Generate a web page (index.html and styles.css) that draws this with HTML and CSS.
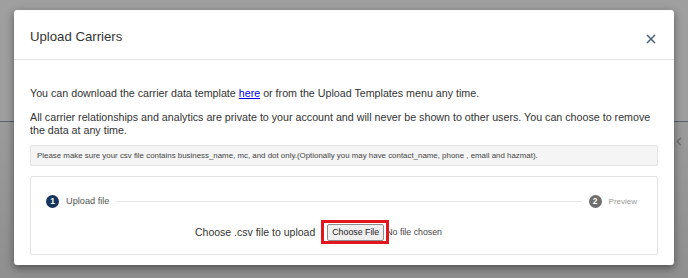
FILE: index.html
```html
<!DOCTYPE html>
<html>
<head>
<meta charset="utf-8">
<title>Upload Carriers</title>
<link rel="stylesheet" href="styles.css">
</head>
<body>
<div class="page">
  <div class="page-top"></div>
  <div class="page-rest">
    <svg class="page-chevron" width="6" height="9" viewBox="0 0 6 9"><path d="M5 0.8 L1.2 4.5 L5 8.2" fill="none" stroke="#707070" stroke-width="1.4"/></svg>
  </div>
</div>

<div class="modal">
  <div class="modal-header">
    <h4 class="modal-title">Upload Carriers</h4>
    <button class="close" aria-label="Close">
      <svg width="10" height="10" viewBox="0 0 10 10"><path d="M1 1 L9 9 M9 1 L1 9" stroke="#4a5f80" stroke-width="1.5" fill="none"/></svg>
    </button>
  </div>
  <div class="modal-body">
    <p class="para">You can download the carrier data template <a href="#" class="link">here</a> or from the Upload Templates menu any time.</p>
    <p class="para">All carrier relationships and analytics are private to your account and will never be shown to other users. You can choose to remove the data at any time.</p>
    <div class="note">Please make sure your csv file contains business_name, mc, and dot only.(Optionally you may have contact_name, phone , email and hazmat).</div>
    <div class="upload-box">
      <div class="steps">
        <span class="step-num active">1</span>
        <span class="step-label active">Upload file</span>
        <span class="step-line"></span>
        <span class="step-num">2</span>
        <span class="step-label">Preview</span>
      </div>
      <div class="choose-row">
        <span class="choose-label">Choose .csv file to upload</span>
        <span class="file-input">
          <span class="file-highlight"><button class="file-btn">Choose File</button></span><span class="file-name">No file chosen</span>
        </span>
      </div>
    </div>
  </div>
</div>
</body>
</html>
```
FILE: styles.css
```css
html, body {
  margin: 0;
  padding: 0;
}
body {
  width: 688px;
  height: 278px;
  overflow: hidden;
  position: relative;
  font-family: "Liberation Sans", Arial, sans-serif;
  color: #333;
  background: #9b9b9b;
}
.page {
  height: 278px;
  display: flex;
  flex-direction: column;
}
.page-top {
  height: 121px;
  background: #9f9f9f;
  border-bottom: 1px solid #5a6470;
}
.page-rest {
  flex: 1;
  display: flex;
  justify-content: flex-end;
  padding: 15px 6px 0 0;
  background: linear-gradient(#9b9b9b, #8f8f8f);
}
.page-chevron {
  display: block;
}

.modal {
  position: absolute;
  left: 14px;
  top: 10px;
  width: 660px;
  background: #fff;
  border-radius: 3px;
  box-shadow: 0 3px 8px rgba(0, 0, 0, 0.45);
}
.modal-header {
  border-bottom: 1px solid #e5e5e5;
  display: flex;
  align-items: center;
  justify-content: space-between;
  padding: 4px 16px 0 16px;
  box-sizing: border-box;
  height: 50px;
}
.modal-title {
  margin: 0;
  font-size: 13.2px;
  font-weight: normal;
  color: #333;
}
.close {
  border: 0;
  background: none;
  padding: 0;
  margin: 4px 2px 0 0;
  width: 10px;
  height: 10px;
  display: flex;
}
.modal-body {
  padding: 27px 16px 10px 16px;
}
.para {
  margin: 0;
  font-size: 10.7px;
  line-height: 13px;
  color: #333;
}
.para + .para {
  margin-top: 11px;
  margin-bottom: 8px;
}
.link {
  color: #0000ee;
  text-decoration: underline;
}
.note {
  height: 21px;
  box-sizing: border-box;
  background: #f5f5f5;
  border: 1px solid #e3e3e3;
  border-radius: 2px;
  font-size: 7.9px;
  color: #444;
  padding: 0 6px;
  display: flex;
  align-items: center;
  margin-bottom: 10px;
}
.upload-box {
  border: 1px solid #e3e3e3;
  border-radius: 2px;
  padding: 17px 20px 10px 15px;
}
.steps {
  display: flex;
  align-items: center;
  height: 14px;
}
.step-num {
  width: 13px;
  height: 13px;
  border-radius: 50%;
  background: #6e6e6e;
  color: #fff;
  font-size: 8.5px;
  font-weight: bold;
  display: flex;
  align-items: center;
  justify-content: center;
  flex: none;
}
.step-num.active {
  background: #15355c;
}
.step-label {
  margin-left: 7px;
  font-size: 8px;
  color: #999;
}
.step-label.active {
  font-size: 9.2px;
  color: #555;
}
.step-line {
  flex: 1;
  height: 1px;
  background: #e6e6e6;
  margin: 0 7px 0 7px;
}
.choose-row {
  display: flex;
  align-items: center;
  height: 24px;
  margin-top: 12px;
  padding-left: 149px;
}
.choose-label {
  font-size: 10.5px;
  color: #333;
  margin-right: 6px;
}
.file-input {
  display: flex;
  align-items: center;
}
.file-highlight {
  display: flex;
  align-items: center;
  height: 18px;
  border: 3px solid #e3151d;
  padding: 0 2px 0 3px;
  position: relative;
  z-index: 1;
}
.file-btn {
  height: 17px;
  width: 57px;
  box-sizing: border-box;
  font-family: "Liberation Sans", Arial, sans-serif;
  font-size: 8.8px;
  color: #222;
  background: #efefef;
  border: 1px solid #8e8e8e;
  border-radius: 2px;
  padding: 0;
}
.file-name {
  font-size: 8.8px;
  color: #444;
  margin-left: -3px;
}
```
